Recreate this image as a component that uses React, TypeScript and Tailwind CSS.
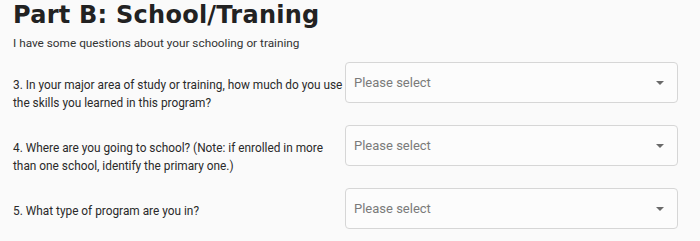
const questions = [
  '3. In your major area of study or training, how much do you use the skills you learned in this program?',
  '4. Where are you going to school? (Note: if enrolled in more than one school, identify the primary one.)',
  '5. What type of program are you in?',
]

function SelectBox() {
  return (
    <div className="flex h-[41px] w-[333px] shrink-0 items-center justify-between rounded border border-[#d6d6d6] bg-[#fcfcfc] pl-[8px] pr-[13px]">
      <span className="text-[13px] text-[#7a7a7a]">Please select</span>
      <svg width="8" height="4" viewBox="0 0 8 4">
        <path d="M0 0 L8 0 L4 4 Z" fill="#6a6a6a" />
      </svg>
    </div>
  )
}

export default function App() {
  return (
    <div className="min-h-screen bg-[#fafafa] px-[13px] pt-[1px]" style={{ fontFamily: 'Roboto, sans-serif' }}>
      <h1 className="text-[24px] font-bold leading-[28px] tracking-[0.25px] text-[#222]"
        style={{ fontFamily: '"DejaVu Sans", sans-serif' }}>
        Part B: School/Traning
      </h1>
      <p className="mt-[6px] text-[11.8px] leading-[16px] text-[#333]">
        I have some questions about your schooling or training
      </p>

      <div className="mt-[11px] flex flex-col gap-[13px]">
        {questions.map(q => (
          <div key={q} className="flex">
            <div className="w-[332px] pt-[15px] text-[11.85px] leading-[17.5px] text-[#2a2a2a]">{q}</div>
            <SelectBox />
          </div>
        ))}
      </div>
    </div>
  )
}
